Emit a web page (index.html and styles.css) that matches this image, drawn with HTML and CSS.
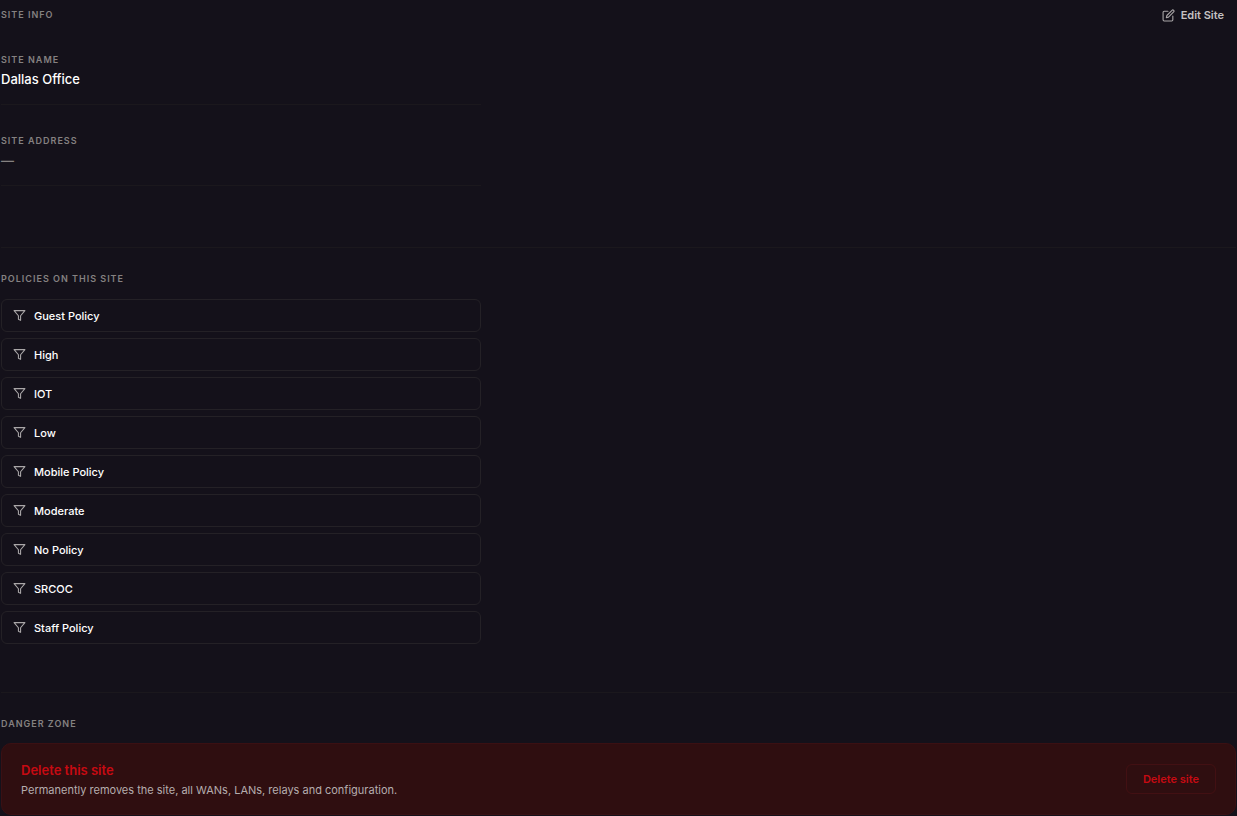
FILE: index.html
```
<!DOCTYPE html>
<html lang="en">
<head>
    <meta charset="UTF-8">
    <meta name="viewport" content="width=device-width, initial-scale=1.0">
    <title>Site Settings</title>
    <link rel="stylesheet" href="styles.css">
</head>
<body>

    <!-- Shared icons -->
    <svg class="icon-defs" aria-hidden="true">
        <symbol id="icon-filter" viewBox="0 0 24 24">
            <path d="M22 3H2l8 9.5V19l4 2v-8.500L22 3z"/>
        </symbol>
    </svg>

    <main class="page">

        <!-- Site Info -->
        <section class="section site-info">
            <div class="section-head">
                <h2 class="label">Site Info</h2>
                <button type="button" class="edit-btn">
                    <svg class="icon" viewBox="0 0 24 24" aria-hidden="true">
                        <path d="M11 4H4a2 2 0 0 0-2 2v14a2 2 0 0 0 2 2h14a2 2 0 0 0 2-2v-7"/>
                        <path d="M18.5 2.5a2.1 2.1 0 0 1 3 3L12 15l-4 1 1-4 9.500-9.500z"/>
                    </svg>
                    Edit Site
                </button>
            </div>
            <dl class="fields">
                <div class="field">
                    <dt class="label">Site Name</dt>
                    <dd class="value">Dallas Office</dd>
                </div>
                <div class="field">
                    <dt class="label">Site Address</dt>
                    <dd class="value empty">—</dd>
                </div>
            </dl>
        </section>

        <!-- Policies -->
        <section class="section policies">
            <h2 class="label">Policies on this site</h2>
            <ul class="policy-list">
                <li class="policy"><svg class="icon"><use href="#icon-filter"/></svg>Guest Policy</li>
                <li class="policy"><svg class="icon"><use href="#icon-filter"/></svg>High</li>
                <li class="policy"><svg class="icon"><use href="#icon-filter"/></svg>IOT</li>
                <li class="policy"><svg class="icon"><use href="#icon-filter"/></svg>Low</li>
                <li class="policy"><svg class="icon"><use href="#icon-filter"/></svg>Mobile Policy</li>
                <li class="policy"><svg class="icon"><use href="#icon-filter"/></svg>Moderate</li>
                <li class="policy"><svg class="icon"><use href="#icon-filter"/></svg>No Policy</li>
                <li class="policy"><svg class="icon"><use href="#icon-filter"/></svg>SRCOC</li>
                <li class="policy"><svg class="icon"><use href="#icon-filter"/></svg>Staff Policy</li>
            </ul>
        </section>

        <!-- Danger Zone -->
        <section class="section danger">
            <h2 class="label">Danger Zone</h2>
            <div class="danger-card">
                <div>
                    <h3>Delete this site</h3>
                    <p>Permanently removes the site, all WANs, LANs, relays and configuration.</p>
                </div>
                <button type="button" class="delete-btn">Delete site</button>
            </div>
        </section>

    </main>

</body>
</html>
```

FILE: styles.css
```
* {
    box-sizing: border-box;
}

body {
    font-family: Inter, "Liberation Sans", sans-serif;
    margin: 0;
    background-color: #14111a;
    color: #fff;
}

h2, h3, p, ul, dl, dd {
    margin: 0;
    padding: 0;
}

button {
    font-family: inherit;
    font-size: 11px;
    font-weight: 600;
    cursor: pointer;
    background: none;
    border: none;
}

.page {
    padding: 0 1px;
}

.label {
    font-size: 9px;
    font-weight: 600;
    line-height: 12px;
    letter-spacing: 1px;
    text-transform: uppercase;
    color: #858181;
}

/* Icons */
.icon-defs {
    display: none;
}
.icon {
    width: 13px;
    height: 13px;
    flex: none;
    fill: none;
    stroke: #aaa7a8;
    stroke-width: 2;
    stroke-linecap: round;
    stroke-linejoin: round;
}

/* Sections */
.section + .section {
    border-top: 1px solid #1b181d;
    padding-top: 25px;
}
.site-info {
    padding-bottom: 61px;
}
.section-head {
    display: flex;
    justify-content: space-between;
    align-items: center;
    height: 30px;
}
.edit-btn {
    display: flex;
    align-items: center;
    gap: 6px;
    padding: 6px 12px;
    color: #c4c1c2;
}

/* Fields */
.fields {
    max-width: 480px;
}
.field {
    padding: 30px 0 14px;
    border-bottom: 1px solid #1b181d;
}
.field:first-child {
    padding-top: 24px;
}
.value {
    margin-top: 4px;
    font-size: 13px;
    font-weight: 500;
    line-height: 18px;
    padding-bottom: 2px;
}
.value.empty {
    color: #858181;
}

/* Policies */
.policies {
    padding-bottom: 48px;
}
.policy-list {
    display: flex;
    flex-direction: column;
    gap: 6px;
    max-width: 480px;
    margin-top: 14px;
    list-style: none;
}
.policy {
    display: flex;
    align-items: center;
    gap: 8px;
    height: 33px;
    padding: 0 11px;
    border: 1px solid #242126;
    border-radius: 6px;
    font-size: 11px;
    font-weight: 500;
}

/* Danger Zone */
.danger-card {
    display: flex;
    justify-content: space-between;
    align-items: center;
    margin-top: 13px;
    padding: 17px 19px;
    background: #2f0e10;
    border: 1px solid #3a1013;
    border-radius: 10px;
}
.danger-card h3 {
    font-size: 13px;
    font-weight: 600;
    line-height: 18px;
    color: #c70a12;
}
.danger-card p {
    margin-top: 4px;
    font-size: 11px;
    line-height: 14px;
    color: #b5adae;
}
.delete-btn {
    height: 30px;
    padding: 0 16px;
    border: 1px solid #421013;
    border-radius: 6px;
    color: #c70a12;
}
```
